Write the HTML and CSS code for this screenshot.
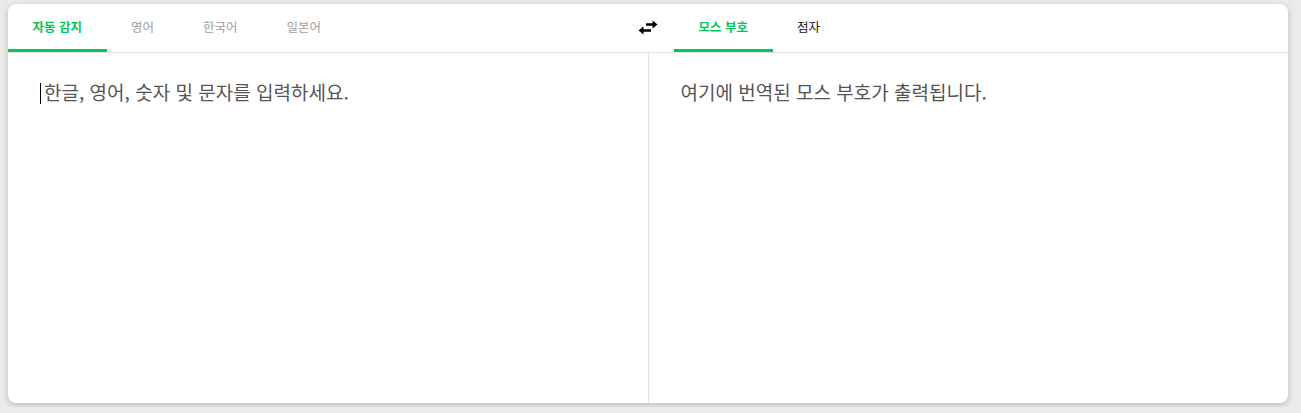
FILE: index.html
```html
<!DOCTYPE html>
<html lang="ko">
<head>
  <meta charset="UTF-8">
  <title>모스 부호 번역기</title>
  <link rel="stylesheet" href="styles.css">
</head>
<body>
  <div class="translator">
    <div class="header">
      <div class="tabs tabs-source">
        <button class="tab active">자동 감지</button>
        <button class="tab">영어</button>
        <button class="tab">한국어</button>
        <button class="tab">일본어</button>
      </div>
      <button class="swap" aria-label="바꾸기">
        <svg width="20" height="16" viewBox="0 0 20 16">
          <path d="M8 5.5h9" stroke="#000" stroke-width="2.4" fill="none"/>
          <path d="M14.5 1.5l5 4-5 4z" fill="#000"/>
          <path d="M13 11.5h-9" stroke="#000" stroke-width="2.4" fill="none"/>
          <path d="M5.5 7.5l-5 4 5 4z" fill="#000"/>
        </svg>
      </button>
      <div class="tabs tabs-target">
        <button class="tab active">모스 부호</button>
        <button class="tab">점자</button>
      </div>
    </div>
    <div class="panes">
      <div class="pane">
        <div class="input"><span class="caret"></span>한글, 영어, 숫자 및 문자를 입력하세요.</div>
      </div>
      <div class="pane pane-output">
        <div class="output">여기에 번역된 모스 부호가 출력됩니다.</div>
      </div>
    </div>
  </div>
</body>
</html>
```

FILE: styles.css
```css
:root {
  --green: #03c75a;
  --line: #e1e1e1;
  --text-muted: #a0a0a0;
  --text-body: #555;
}

* {
  margin: 0;
  padding: 0;
  box-sizing: border-box;
}

body {
  background: #ebebeb;
  padding: 4px 8px;
  font-family: "Noto Sans CJK KR", "Noto Sans", sans-serif;
}

.translator {
  width: 1280px;
  height: 399px;
  background: #fff;
  border-radius: 8px;
  box-shadow: 0 2px 7px rgba(0, 0, 0, 0.2);
  display: flex;
  flex-direction: column;
  overflow: hidden;
}

.header {
  display: flex;
  height: 49px;
  border-bottom: 1px solid var(--line);
}

.tabs {
  display: flex;
  flex: 1;
}

.tab {
  background: none;
  border: none;
  border-bottom: 3px solid transparent;
  padding: 0 24.5px;
  height: 48px;
  font-family: inherit;
  font-size: 12.5px;
  color: var(--text-muted);
  cursor: pointer;
}

.tab.active {
  color: var(--green);
  font-weight: 700;
  border-bottom-color: var(--green);
}

.tabs-target .tab {
  color: #111;
}

.tabs-target .tab.active {
  color: var(--green);
}

.swap {
  width: 52px;
  height: 48px;
  background: none;
  border: none;
  display: flex;
  align-items: center;
  justify-content: center;
  padding-bottom: 3px;
  cursor: pointer;
}

.panes {
  display: flex;
  flex: 1;
}

.pane {
  flex: 1;
  padding: 24px 32px;
}

.pane-output {
  border-left: 1px solid var(--line);
}

.input,
.output {
  font-size: 19px;
  line-height: 30px;
  color: var(--text-body);
}

.caret {
  display: inline-block;
  width: 1px;
  height: 21px;
  background: #000;
  vertical-align: -4px;
  margin-right: 3px;
}
```
